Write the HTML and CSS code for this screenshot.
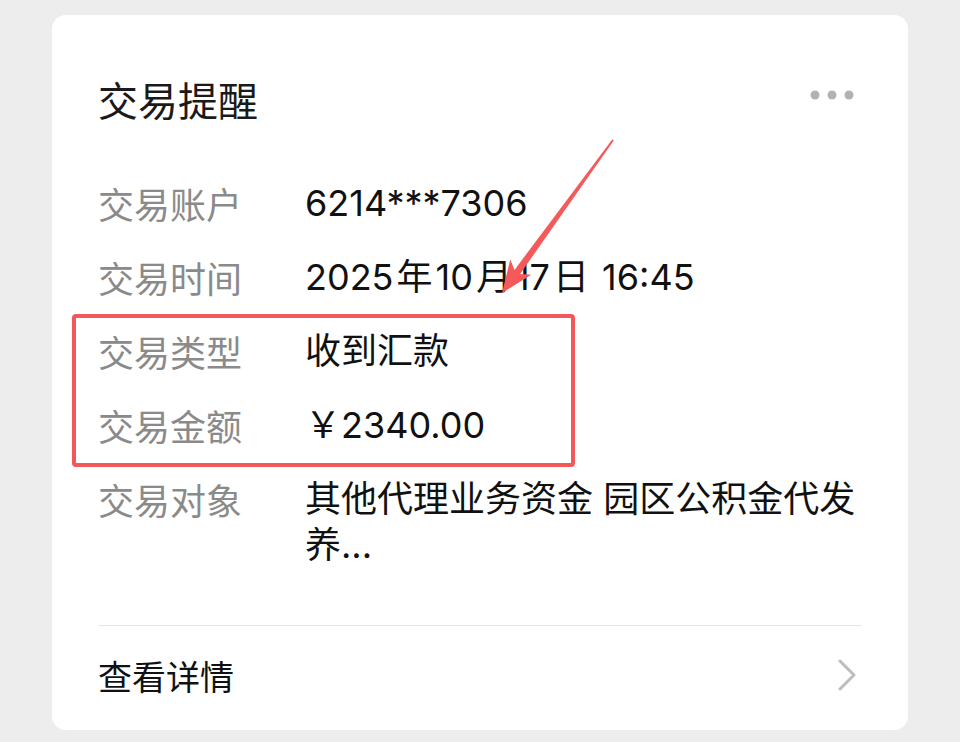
FILE: index.html
```html
<!DOCTYPE html>
<html lang="zh-CN">
<head>
  <meta charset="UTF-8">
  <meta name="viewport" content="width=device-width, initial-scale=1.0">
  <title>交易提醒</title>
  <link rel="stylesheet" href="styles.css">
</head>
<body>
  <div class="card">
    <div class="header">
      <h2 class="title">交易提醒</h2>
      <svg class="more" width="44" height="10" viewBox="0 0 44 10" aria-hidden="true">
        <circle cx="5" cy="5" r="4.5" fill="#b2b2b2"/>
        <circle cx="22" cy="5" r="4.5" fill="#b2b2b2"/>
        <circle cx="39" cy="5" r="4.5" fill="#b2b2b2"/>
      </svg>
    </div>

    <div class="rows">
      <div class="row">
        <span class="label">交易账户</span>
        <span class="value">6214***7306</span>
      </div>
      <div class="row">
        <span class="label">交易时间</span>
        <span class="value">2025<span class="sp">年</span>10<span class="sp">月</span>17<span class="sp">日</span> 16:45</span>
      </div>
      <div class="row">
        <span class="label">交易类型</span>
        <span class="value">收到汇款</span>
      </div>
      <div class="row">
        <span class="label">交易金额</span>
        <span class="value">￥2340.00</span>
      </div>
      <div class="row">
        <span class="label">交易对象</span>
        <span class="value">其他代理业务资金 园区公积金代发养...</span>
      </div>
    </div>

    <div class="footer">
      <span class="footer-text">查看详情</span>
      <svg class="chevron" width="20" height="32" viewBox="0 0 20 32" aria-hidden="true">
        <polyline points="3,2 17,16 3,30" fill="none" stroke="#bdbdbd" stroke-width="3" stroke-linecap="round" stroke-linejoin="round"/>
      </svg>
    </div>

    <!-- annotation -->
    <div class="highlight-box"></div>
    <svg class="arrow" width="960" height="742" viewBox="0 0 960 742" aria-hidden="true">
      <polygon fill="#f45a5b" points="612.2,139.4 514.5,269.9 510.3,259.5 502,293 531.3,274.7 520.1,274 613.8,140.6"/>
    </svg>
  </div>
</body>
</html>
```

FILE: styles.css
```css
body {
  margin: 0;
  padding: 15px 52px 0;
  background-color: #ededed;
  font-family: "Noto Sans CJK SC", sans-serif;
  color: #111;
}

.card {
  position: relative;
  background-color: #fff;
  border-radius: 14px;
  padding: 60px 46px 0;
  height: 655px;
}

.header {
  display: flex;
  align-items: center;
  justify-content: space-between;
  height: 48px;
}

.title {
  margin: 0;
  font-size: 40px;
  font-weight: 400;
  line-height: 48px;
  color: #1a1a1a;
}

.more {
  margin-right: 8px;
  margin-top: -8px;
}

.rows {
  display: flex;
  flex-direction: column;
  gap: 28px;
  margin-top: 57px;
}

.row {
  display: flex;
  font-size: 36px;
  line-height: 46px;
}

.label {
  flex: 0 0 207px;
  color: #8a8a8a;
}

.value {
  flex: 1;
  font-family: Inter, "Noto Sans CJK SC", sans-serif;
  color: #111;
}

.value .sp {
  margin: 0 3px;
}

.footer {
  display: flex;
  align-items: center;
  justify-content: space-between;
  margin-top: 57px;
  padding: 27px 0 31px;
  border-top: 1px solid #e6e6e6;
}

.footer-text {
  font-size: 34px;
  line-height: 46px;
}

.chevron {
  margin-right: 5px;
  margin-top: -2px;
}

.highlight-box {
  position: absolute;
  left: 20px;
  top: 299px;
  width: 495px;
  height: 145px;
  border: 4px solid #f4575a;
  border-radius: 4px;
}

.arrow {
  position: absolute;
  left: -52px;
  top: -15px;
}
```
